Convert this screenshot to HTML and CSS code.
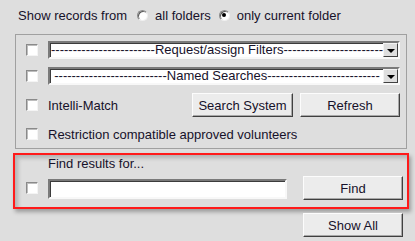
FILE: index.html
```html
<!DOCTYPE html>
<html lang="en">
  <head>
    <meta charset="UTF-8" />
    <title>Search Options</title>
    <link rel="stylesheet" href="styles.css">
  </head>
  <body>
    <div class="scope">
      <span class="scope-label">Show records from</span>
      <span class="radio"></span>
      <span class="radio-text">all folders</span>
      <span class="radio checked"></span>
      <span class="radio-text">only current folder</span>
    </div>

    <div class="group">
      <!-- filters -->
      <div class="row">
        <span class="check"></span>
        <div class="combo">
          <span class="combo-text">------------------------Request/assign Filters-----------------------</span>
          <span class="combo-arrow"></span>
        </div>
      </div>
      <div class="row">
        <span class="check"></span>
        <div class="combo">
          <span class="combo-text">--------------------------Named Searches--------------------------</span>
          <span class="combo-arrow"></span>
        </div>
      </div>
      <div class="row row-buttons">
        <span class="check"></span>
        <span class="label grow">Intelli-Match</span>
        <button class="btn btn-search">Search System</button>
        <button class="btn btn-refresh">Refresh</button>
      </div>
      <div class="row">
        <span class="check"></span>
        <span class="label">Restriction compatible approved volunteers</span>
      </div>
    </div>

    <!-- highlighted find area -->
    <div class="find-box">
      <div class="find-title">Find results for...</div>
      <div class="find-row">
        <span class="check"></span>
        <input class="find-input" type="text" />
        <button class="btn btn-find">Find</button>
      </div>
    </div>

    <div class="bottom">
      <button class="btn btn-find">Show All</button>
    </div>
  </body>
</html>
```

FILE: styles.css
```css
body {
  font-family: "Liberation Sans", Arial, sans-serif;
  font-size: 13px;
  background-color: #dedede;
  color: #16112a;
  margin: 0;
  padding: 0;
  width: 415px;
  height: 241px;
  overflow: hidden;
}

/* Top radio line */
.scope {
  display: flex;
  align-items: center;
  height: 22px;
  padding: 4px 0 0 18px;
}

.scope-label {
  margin-right: 10px;
}

.radio {
  width: 9px;
  height: 9px;
  border-radius: 50%;
  border: 1px solid #8a8a8a;
  border-right-color: #f0f0f0;
  border-bottom-color: #f0f0f0;
  background: #fff;
  box-shadow: inset 1px 1px #5a5a5a;
  display: flex;
  align-items: center;
  justify-content: center;
  margin-right: 7px;
}

.radio.checked::after {
  content: "";
  width: 4px;
  height: 4px;
  border-radius: 50%;
  background: #000;
}

.radio-text {
  margin-right: 8px;
}

/* Group box */
.group {
  box-sizing: border-box;
  margin: 8px 0 0 15px;
  width: 392px;
  border: 1px solid #a0a0a0;
  padding: 6px 6px 5px 10px;
  display: flex;
  flex-direction: column;
  gap: 8px;
}

.row {
  display: flex;
  align-items: center;
  height: 18px;
}

.row-buttons {
  height: 24px;
}

.check {
  width: 10px;
  height: 10px;
  flex: none;
  background: #fff;
  border: 1px solid #8a8a8a;
  border-right-color: #f4f4f4;
  border-bottom-color: #f4f4f4;
  box-shadow: inset 1px 1px #bdbdbd;
  margin-right: 10px;
}

.label {
  white-space: nowrap;
}

.grow {
  flex: 1;
}

/* Drop-down look */
.combo {
  box-sizing: border-box;
  width: 352px;
  height: 18px;
  display: flex;
  align-items: center;
  background: #fff;
  border: 2px solid;
  border-color: #7a7a7a #f8f8f8 #f8f8f8 #7a7a7a;
  box-shadow: inset 1px 1px #3c3c3c;
  padding: 0 0 0 1px;
}

.combo-text {
  flex: 1;
  white-space: nowrap;
  text-align: center;
  line-height: 14px;
}

.combo-arrow {
  width: 15px;
  height: 14px;
  flex: none;
  background: #dedede;
  box-sizing: border-box;
  border: 1px solid;
  border-color: #f4f4f4 #404040 #404040 #f4f4f4;
  display: flex;
  align-items: center;
  justify-content: center;
}

.combo-arrow::after {
  content: "";
  border-left: 4px solid transparent;
  border-right: 4px solid transparent;
  border-top: 4px solid #000;
  margin-top: 1px;
}

/* Buttons */
.btn {
  font-family: "Liberation Sans", Arial, sans-serif;
  font-size: 13px;
  color: #16112a;
  background: #ececec;
  border: 1px solid;
  border-color: #fcfcfc #404040 #404040 #fcfcfc;
  box-shadow: inset -1px -1px #a8a8a8;
  height: 24px;
  padding: 0;
}

.btn-search {
  width: 101px;
  margin-right: 7px;
}

.btn-refresh {
  width: 100px;
}

.btn-find {
  width: 100px;
}

/* Find area */
.find-box {
  margin: 4px 0 0 13px;
  width: 381px;
  height: 51px;
  border: 2px solid #ff1a1a;
  padding: 1px 0 0 11px;
  box-shadow: 2px 3px 4px rgba(0, 0, 0, 0.3), inset 3px 3px 4px rgba(0, 0, 0, 0.2);
}

.find-title {
  padding-left: 22px;
  height: 16px;
  line-height: 16px;
  margin-bottom: 4px;
}

.find-row {
  display: flex;
  align-items: center;
  height: 24px;
}

.find-input {
  box-sizing: border-box;
  width: 239px;
  height: 20px;
  border: 2px solid;
  border-color: #7a7a7a #f8f8f8 #f8f8f8 #7a7a7a;
  box-shadow: inset 1px 1px #3c3c3c;
  background: #fff;
  margin: 2px 16px 0 0;
  padding: 0;
}

.bottom {
  display: flex;
  padding: 4px 0 0 303px;
}
```
